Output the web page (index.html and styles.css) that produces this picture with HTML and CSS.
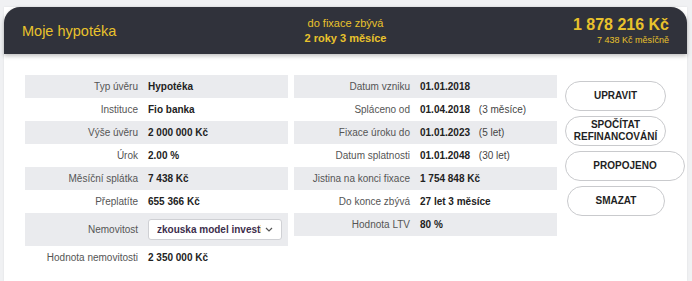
FILE: index.html
```html
<!DOCTYPE html>
<html lang="cs">
<head>
<meta charset="UTF-8">
<title>Moje hypotéka</title>
<link rel="stylesheet" href="styles.css">
</head>
<body>
<div class="card">
    <div class="card-head">
        <div class="title">Moje hypotéka</div>
        <div class="fix">
            <div class="fix-label">do fixace zbývá</div>
            <div class="fix-value">2 roky 3 měsíce</div>
        </div>
        <div class="total">
            <div class="total-value">1 878 216 Kč</div>
            <div class="total-month">7 438 Kč měsíčně</div>
        </div>
    </div>

    <div class="card-body">
        <table class="info">
            <tr><td class="lbl">Typ úvěru</td><td class="val">Hypotéka</td></tr>
            <tr><td class="lbl">Instituce</td><td class="val">Fio banka</td></tr>
            <tr><td class="lbl">Výše úvěru</td><td class="val">2 000 000 Kč</td></tr>
            <tr><td class="lbl">Úrok</td><td class="val">2.00 %</td></tr>
            <tr><td class="lbl">Měsíční splátka</td><td class="val">7 438 Kč</td></tr>
            <tr><td class="lbl">Přeplatíte</td><td class="val">655 366 Kč</td></tr>
            <tr class="tall">
                <td class="lbl">Nemovitost</td>
                <td class="val">
                    <div class="select-wrap">
                        <select class="select">
                            <option>zkouska model investice</option>
                        </select>
                        <svg class="chevron" width="8" height="5" viewBox="0 0 8 5"><path d="M1 1l3 3 3-3" fill="none" stroke="#555" stroke-width="1.2"/></svg>
                    </div>
                </td>
            </tr>
            <tr><td class="lbl">Hodnota nemovitosti</td><td class="val">2 350 000 Kč</td></tr>
        </table>

        <table class="info right">
            <tr><td class="lbl">Datum vzniku</td><td class="val">01.01.2018</td></tr>
            <tr><td class="lbl">Spláceno od</td><td class="val">01.04.2018 <span class="note">(3 měsíce)</span></td></tr>
            <tr><td class="lbl">Fixace úroku do</td><td class="val">01.01.2023 <span class="note">(5 let)</span></td></tr>
            <tr><td class="lbl">Datum splatnosti</td><td class="val">01.01.2048 <span class="note">(30 let)</span></td></tr>
            <tr><td class="lbl">Jistina na konci fixace</td><td class="val">1 754 848 Kč</td></tr>
            <tr><td class="lbl">Do konce zbývá</td><td class="val">27 let 3 měsíce</td></tr>
            <tr><td class="lbl">Hodnota LTV</td><td class="val">80 %</td></tr>
        </table>

        <div class="actions">
            <button class="btn">UPRAVIT</button>
            <button class="btn">SPOČÍTAT<br>REFINANCOVÁNÍ</button>
            <button class="btn btn-wide">PROPOJENO</button>
            <button class="btn btn-narrow">SMAZAT</button>
        </div>
    </div>
</div>
</body>
</html>
```

FILE: styles.css
```css
body {
    margin: 0;
    padding: 7px 5px 0 4px;
    background: #f0f1f3;
    font-family: "Liberation Sans", Arial, sans-serif;
}

.card {
    background: #ffffff;
    height: 274px;
    box-shadow: 0 0 2px rgba(0,0,0,0.08);
}

.card-head {
    display: grid;
    grid-template-columns: 1fr auto 1fr;
    align-items: center;
    height: 47px;
    padding: 0 18px 0 18px;
    background: #30323b;
    color: #e9c22c;
    border-radius: 16px 16px 0 0;
    box-shadow: 0 2px 4px rgba(0,0,0,0.25);
    position: relative;
}

.title {
    font-size: 14.5px;
}

.fix {
    text-align: center;
}
.fix-label {
    font-size: 11px;
    line-height: 15px;
}
.fix-value {
    font-size: 11px;
    font-weight: bold;
    line-height: 15px;
}

.total {
    text-align: right;
}
.total-value {
    font-size: 16px;
    font-weight: bold;
    line-height: 19px;
}
.total-month {
    font-size: 9px;
    line-height: 13px;
}

.card-body {
    display: flex;
    align-items: flex-start;
    padding: 21px 0 0 21px;
}

table.info {
    border-collapse: collapse;
    width: 263px;
    margin-right: 6px;
    font-size: 10px;
}
table.info tr:nth-child(odd) {
    background: #eaebee;
}
table.info td {
    height: 23px;
    padding: 0 5px 0 5px;
    white-space: nowrap;
}
table.info tr.tall td {
    height: 33px;
}
td.lbl {
    width: 108px;
    text-align: right;
    color: #555;
}
td.val {
    color: #222;
    font-weight: bold;
}
table.right td.lbl {
    width: 111px;
}
.note {
    font-weight: normal;
    color: #444;
    margin-left: 6px;
}

.select-wrap {
    position: relative;
    width: 134px;
}
.select {
    appearance: none;
    -webkit-appearance: none;
    width: 134px;
    height: 21px;
    padding: 0 20px 0 8px;
    border: 1px solid #cfd0d4;
    border-radius: 3px;
    background: #ffffff;
    color: #3d2e4c;
    font-family: "Liberation Sans", Arial, sans-serif;
    font-size: 10px;
    font-weight: bold;
}
.chevron {
    position: absolute;
    right: 9px;
    top: 8px;
}

.actions {
    display: flex;
    flex-direction: column;
    align-items: flex-start;
    gap: 5px;
    margin: 6px 0 0 2px;
}
.btn {
    width: 101px;
    height: 30px;
    padding: 0;
    background: #ffffff;
    border: 1px solid #c9cacd;
    border-radius: 16px;
    color: #1f1f24;
    font-family: "Liberation Sans", Arial, sans-serif;
    font-size: 10px;
    font-weight: bold;
    line-height: 12px;
    cursor: pointer;
}
.btn-wide {
    width: 120px;
}
.btn-narrow {
    width: 98px;
    margin-left: 2px;
}
```
